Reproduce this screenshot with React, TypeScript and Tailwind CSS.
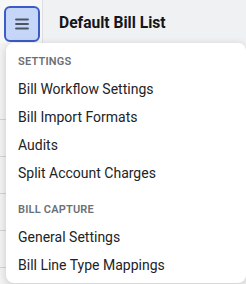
import { useState } from "react";

const groups = [
  {
    title: "SETTINGS",
    items: ["Bill Workflow Settings", "Bill Import Formats", "Audits", "Split Account Charges"],
  },
  {
    title: "BILL CAPTURE",
    items: ["General Settings", "Bill Line Type Mappings"],
  },
];

function MenuIcon() {
  return (
    <svg width="14" height="12" viewBox="0 0 14 12" fill="none">
      <path d="M1 1.5h12M1 6h12M1 10.5h12" stroke="#4b5563" strokeWidth="1.8" strokeLinecap="round" />
    </svg>
  );
}

export default function App() {
  const [open, setOpen] = useState(true);

  return (
    <div className="relative h-[284px] w-[246px] overflow-hidden bg-white font-['Roboto',sans-serif]">
      <div className="flex h-[43px]">
        <div className="flex w-[43px] shrink-0 items-center border-r border-[#dedfe2] bg-[#f7f7f8] pl-1 pt-1">
          <button
            onClick={() => setOpen(!open)}
            className="grid h-9 w-9 place-items-center rounded-md border-2 border-[#3b5cc4] bg-[#c6d6f8]"
          >
            <MenuIcon />
          </button>
        </div>
        <div className="flex flex-1 items-center bg-[#f0f1f3] pl-4 pt-1 text-[15.6px] font-bold text-[#15161a]">
          Default Bill List
        </div>
      </div>

      {/* rows behind the menu */}
      <div className="bg-[#f3f3f4] pt-[40px]">
        {[0, 1, 2, 3, 4, 5].map((i) => (
          <div key={i} className="h-[37px] border-b border-[#d4d4d8]" />
        ))}
      </div>

      {open && (
        <div className="absolute left-[6px] top-[43px] w-[240px] rounded-lg bg-white pt-[6px] pb-1 shadow-[0_2px_8px_rgba(0,0,0,0.18)]">
          {groups.map((g, gi) => (
            <div key={g.title} className={gi > 0 ? "mt-[10px]" : ""}>
              <div className="flex h-[26px] items-center px-3 text-[11px] font-semibold tracking-[0.2px] text-[#6b6f76]">
                {g.title}
              </div>
              {g.items.map((item) => (
                <div key={item} className="flex h-7 items-center px-3 text-[14px] text-[#222326]">
                  {item}
                </div>
              ))}
            </div>
          ))}
        </div>
      )}
    </div>
  );
}
